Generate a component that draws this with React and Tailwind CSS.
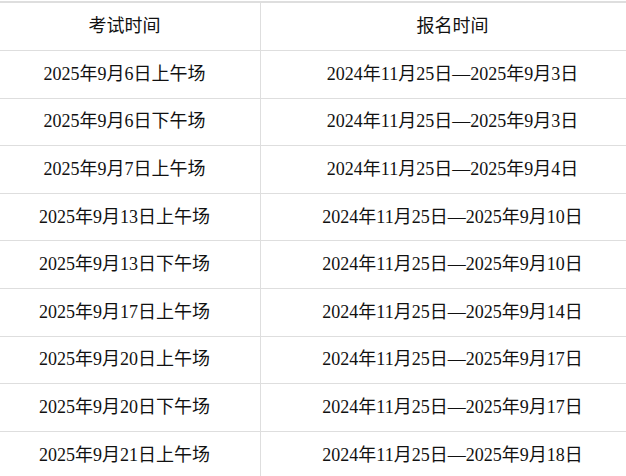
import React from "react";

const rows = [
  ["2025年9月6日上午场", "2024年11月25日", "2025年9月3日"],
  ["2025年9月6日下午场", "2024年11月25日", "2025年9月3日"],
  ["2025年9月7日上午场", "2024年11月25日", "2025年9月4日"],
  ["2025年9月13日上午场", "2024年11月25日", "2025年9月10日"],
  ["2025年9月13日下午场", "2024年11月25日", "2025年9月10日"],
  ["2025年9月17日上午场", "2024年11月25日", "2025年9月14日"],
  ["2025年9月20日上午场", "2024年11月25日", "2025年9月17日"],
  ["2025年9月20日下午场", "2024年11月25日", "2025年9月17日"],
  ["2025年9月21日上午场", "2024年11月25日", "2025年9月18日"],
];

export default function App() {
  return (
    <div
      className="w-[626px] h-[476px] overflow-hidden bg-white pt-px text-[18px] text-[#111]"
      style={{ fontFamily: '"Liberation Serif", "Noto Sans CJK SC", serif' }}
    >
      <div className="border-t-2 border-[#dedede]">
        <div className="flex h-[48px] border-b border-[#dedede]">
          <div className="w-[261px] shrink-0 border-r border-[#dedede] pr-[11px] flex items-center justify-center">
            考试时间
          </div>
          <div className="flex-1 pl-[18px] flex items-center justify-center">
            报名时间
          </div>
        </div>
        {rows.map((r, i) => (
          <div key={i} className="flex h-[47.6px] border-b border-[#dedede]">
            <div className="w-[261px] shrink-0 border-r border-[#dedede] pr-[11px] flex items-center justify-center whitespace-nowrap">
              {r[0]}
            </div>
            <div className="flex-1 pl-[18px] flex items-center justify-center whitespace-nowrap">
              {r[1]}—{r[2]}
            </div>
          </div>
        ))}
      </div>
    </div>
  );
}
